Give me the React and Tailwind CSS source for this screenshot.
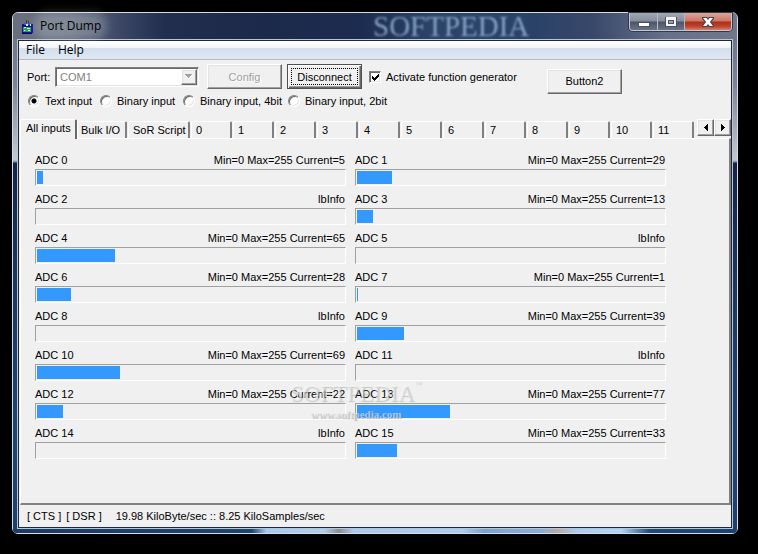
import React from "react";

const CHANNELS = [
  5, 29, null, 13, 65, null, 28, 1, null, 39, 69, null, 22, 77, null, 33,
];

const NUMBER_TABS = ["0", "1", "2", "3", "4", "5", "6", "7", "8", "9", "10", "11"];

const RAISED =
  "border border-t-white border-l-white border-r-[#696969] border-b-[#696969] shadow-[inset_-1px_-1px_0_#a0a0a0,inset_1px_1px_0_#e3e3e3] bg-[#f0f0f0]";

const TAB =
  "relative h-[17px] rounded-t-[2px] border-t border-l border-t-white border-l-white border-r-2 border-r-[#808080] text-left whitespace-nowrap leading-[16px]";

function AppIcon() {
  return (
    <svg width="16" height="16" viewBox="0 0 16 16" shapeRendering="crispEdges" aria-hidden="true">
      <path d="M3 1h2v1H3zM8 0h1v3H8zM12 1h2v1h-2zM5 2h2v1H5zM10 2h2v1h-2zM2 4h3v1H2zM11 4h3v1h-3zM6 3h5v1H6z" fill="#77724f" />
      <path d="M7 2h1v3H7zM9 3h1v2H9z" fill="#3c3b2c" />
      <path d="M3 6h11v9H3z" fill="#1010a8" />
      <path d="M5 5h3v2H5zM9 5h3v2H9z" fill="#2b55ff" />
      <path d="M7 6h2v2H7zM11 6h1v2h-1z" fill="#d9e6d5" />
      <path d="M4 9h8v5H4z" fill="#27a45a" />
      <path d="M5 9h2v1H5zM8 10h3v1H8zM5 12h1v1H5zM9 12h2v1H9z" fill="#d8f5d8" />
      <path d="M4 8h8v1H4zM3 15h10v1H3z" fill="#080850" />
    </svg>
  );
}

function TitleBar() {
  return (
    <header className="relative flex h-[26px] items-start rounded-t-[5px] bg-[linear-gradient(90deg,#687080_0%,#626b7e_8%,#3a4664_15%,#222e4e_21%,#1c294a_35%,#1c2c50_48%,#2b4468_58%,#2a4268_72%,#38486a_80%,#667088_90%,#70788a_100%)]">
      <span
        aria-hidden="true"
        className="absolute left-1/2 top-0 ml-[-2px] select-none font-['Liberation_Serif',serif] text-[29px] leading-[26px] text-[#9dbbdc] opacity-80 blur-[1px]"
      >
        SOFTPEDIA
      </span>
      <div className="relative flex items-center pl-[6px] pt-[5px]">
        <AppIcon />
        <h1 className="ml-[5px] rounded-full bg-white/20 font-['Open_Sans',sans-serif] text-[12px] leading-[16px] text-black shadow-[0_0_8px_6px_rgba(255,255,255,0.2)]">
          Port Dump
        </h1>
      </div>
      <div className="relative ml-auto mr-[5px] flex h-[18px] overflow-hidden rounded-b-[4px] border border-t-0 border-[#c4c9d2] shadow-[0_0_0_1px_#30384a]">
        <button
          type="button"
          aria-label="Minimize"
          className="flex w-[28px] items-center justify-center border-r border-[#b4bac5] bg-[linear-gradient(#a3a9b5_0%,#858c9b_48%,#4c5467_52%,#6b7386_100%)]"
        >
          <svg width="12" height="6" viewBox="0 0 12 6" className="mt-[4px]" shapeRendering="crispEdges">
            <path d="M0 1h12v5H0z" fill="#4b5263" />
            <path d="M1 2h10v3H1z" fill="#fff" />
          </svg>
        </button>
        <button
          type="button"
          aria-label="Maximize"
          className="flex w-[27px] items-center justify-center border-r border-[#b4bac5] bg-[linear-gradient(#a3a9b5_0%,#858c9b_48%,#4c5467_52%,#6b7386_100%)]"
        >
          <svg width="12" height="10" viewBox="0 0 12 10" shapeRendering="crispEdges">
            <path d="M0 0h12v10H0z" fill="#4b5263" />
            <path d="M1 0h10v9H1z" fill="#f4f4f6" />
            <path d="M3 3h6v4H3z" fill="#4b5263" />
            <path d="M4 4h4v2H4z" fill="#9aa1b0" />
          </svg>
        </button>
        <button
          type="button"
          aria-label="Close"
          className="flex w-[46px] items-center justify-center bg-[linear-gradient(#dda59b_0%,#cb7667_48%,#b02b16_52%,#bf4630_80%,#d4826a_100%)]"
        >
          <svg width="12" height="10" viewBox="0 0 12 10">
            <path d="M0 0h5l1 1 1-1h5v2L9 5l3 3v2H7L6 9l-1 1H0V8l3-3-3-3z" fill="#4b4550" />
            <path d="M1 1h3.500l1.500 2 1.500-2H11L7.800 5 11 9H7.500L6 7 4.500 9H1l3.200-4z" fill="#fff" />
          </svg>
        </button>
      </div>
    </header>
  );
}

function Radio({ id, label, className, checked }) {
  return (
    <div className={"flex items-center " + className}>
      <input
        id={id}
        name="mode"
        type="radio"
        defaultChecked={checked}
        className="size-[12px] shrink-0 appearance-none rounded-full border border-t-[#808080] border-l-[#808080] border-r-white border-b-white bg-white shadow-[inset_1px_1px_0_#696969,inset_-1px_-1px_0_#e3e3e3] checked:bg-[radial-gradient(circle,#000_2px,#fff_3px)]"
      />
      <label htmlFor={id} className="ml-[5px] whitespace-nowrap">
        {label}
      </label>
    </div>
  );
}

function Toolbar() {
  return (
    <div className="flex h-[59px] items-start pl-[8px] pt-[4px]">
      <div className="w-[520px]">
        <div className="flex h-[25px] items-center leading-[16px]">
          <label htmlFor="port" className="w-[28px]">
            Port:
          </label>
          <div className="relative flex w-[144px]">
            <select
              id="port"
              disabled
              className="h-[20px] w-full appearance-none border border-t-[#808080] border-l-[#808080] border-r-white border-b-white bg-white pl-[4px] text-[#808080] opacity-100 shadow-[inset_1px_1px_0_#696969,inset_-1px_-1px_0_#e3e3e3]"
            >
              <option>COM1</option>
            </select>
            <span
              className={
                "pointer-events-none absolute inset-y-[2px] right-[2px] flex w-[16px] items-center justify-center " + RAISED
              }
            >
              <svg width="8" height="5" viewBox="0 0 8 5" shapeRendering="crispEdges">
                <path d="M1 1h7v1H1zM2 2h5v1H2zM3 3h3v1H3zM4 4h1v1H4z" fill="#fff" />
                <path d="M0 0h7v1H0zM1 1h5v1H1zM2 2h3v1H2zM3 3h1v1H3z" fill="#a0a0a0" />
              </svg>
            </span>
          </div>
          <button
            type="button"
            disabled
            className={"ml-[8px] h-[25px] w-[75px] text-[#a0a0a0] [text-shadow:1px_1px_0_#fff] " + RAISED}
          >
            Config
          </button>
          <button
            type="button"
            className="ml-[5px] h-[25px] w-[75px] border border-[#505050] bg-[#f0f0f0] p-[3px] shadow-[inset_1px_1px_0_#fff,inset_-1px_-1px_0_#696969,inset_-2px_-2px_0_#a0a0a0]"
          >
            <span className="flex h-full items-center justify-center border border-dotted border-black">Disconnect</span>
          </button>
          <span className="relative ml-[7px] flex">
            <input
              id="funcgen"
              type="checkbox"
              defaultChecked
              className="size-[12px] appearance-none border border-t-[#808080] border-l-[#808080] border-r-white border-b-white bg-white shadow-[inset_1px_1px_0_#696969,inset_-1px_-1px_0_#e3e3e3]"
            />
            <svg
              width="7"
              height="7"
              viewBox="0 0 7 7"
              className="pointer-events-none absolute left-[3px] top-[3px]"
              shapeRendering="crispEdges"
            >
              <path d="M0 2h1v3H0zM1 3h1v3H1zM2 4h1v3H2zM3 3h1v3H3zM4 2h1v3H4zM5 1h1v3H5zM6 0h1v3H6z" />
            </svg>
          </span>
          <label htmlFor="funcgen" className="ml-[5px] whitespace-nowrap">
            Activate function generator
          </label>
        </div>
        <div className="mt-[5px] flex h-[14px] items-center pl-px">
          <Radio id="m-text" label="Text input" className="w-[72px]" checked />
          <Radio id="m-bin" label="Binary input" className="w-[83px]" />
          <Radio id="m-bin4" label="Binary input, 4bit" className="w-[105px]" />
          <Radio id="m-bin2" label="Binary input, 2bit" className="" />
        </div>
      </div>
      <button type="button" className={"mt-[5px] h-[25px] w-[75px] pb-[2px] " + RAISED}>
        Button2
      </button>
    </div>
  );
}

function TabStrip() {
  return (
    <div className="flex h-[19px] items-end pl-px" role="tablist">
      <button
        type="button"
        role="tab"
        aria-selected="true"
        className="relative z-10 -mb-px h-[20px] w-[57px] rounded-t-[2px] border-t border-l border-r-2 border-t-white border-l-white border-r-[#696969] bg-[#f0f0f0] pb-[4px] pl-[5px] text-left leading-[14px] whitespace-nowrap"
      >
        All inputs
      </button>
      <button type="button" role="tab" aria-selected="false" className={TAB + " w-[50px] pl-[3px]"}>
        Bulk I/O
      </button>
      <button type="button" role="tab" aria-selected="false" className={TAB + " ml-[1px] w-[62px] pl-[4px]"}>
        SoR Script
      </button>
      {NUMBER_TABS.map((n) => (
        <button key={n} type="button" role="tab" aria-selected="false" className={TAB + " ml-[1px] w-[41px] pl-[4px]"}>
          {n}
        </button>
      ))}
      <div className="ml-auto flex h-[17px] self-start">
        <button type="button" aria-label="Scroll tabs left" className={"flex w-[17px] items-center justify-center " + RAISED}>
          <svg width="4" height="7" viewBox="0 0 4 7" shapeRendering="crispEdges">
            <path d="M3 0h1v7H3zM2 1h1v5H2zM1 2h1v3H1zM0 3h1v1H0z" />
          </svg>
        </button>
        <button type="button" aria-label="Scroll tabs right" className={"flex w-[17px] items-center justify-center " + RAISED}>
          <svg width="4" height="7" viewBox="0 0 4 7" shapeRendering="crispEdges">
            <path d="M0 0h1v7H0zM1 1h1v5H1zM2 2h1v3H2zM3 3h1v1H3z" />
          </svg>
        </button>
      </div>
    </div>
  );
}

function Channel({ index, value }) {
  return (
    <div>
      <div className="flex h-[16px] items-start justify-between whitespace-nowrap">
        <span>ADC {index}</span>
        <span className="pr-px">{value === null ? "lbInfo" : `Min=0 Max=255 Current=${value}`}</span>
      </div>
      <div
        role="progressbar"
        aria-label={`ADC ${index}`}
        aria-valuemin={0}
        aria-valuemax={255}
        aria-valuenow={value ?? 0}
        className="h-[17px] border border-t-[#a0a0a0] border-l-[#a0a0a0] border-r-white border-b-white p-px"
      >
        <div className="h-full bg-[#3399ff]" style={{ width: `${((value ?? 0) / 255) * 100}%` }} />
      </div>
    </div>
  );
}

function Watermark() {
  return (
    <div
      aria-hidden="true"
      className="pointer-events-none absolute left-1/2 top-[243px] -ml-[84px] w-[130px] select-none text-center font-['Liberation_Serif',serif] whitespace-nowrap"
    >
      <div className="flex justify-center text-[23px] leading-[24px] text-[#f0f0f0]/40 [text-shadow:1px_1px_1px_rgba(130,130,130,0.4),-1px_-1px_0_rgba(255,255,255,0.4)]">
        SOFTPEDIA<sup className="text-[7px] leading-[10px]">™</sup>
      </div>
      <div className="text-[11px] leading-[16px] font-bold text-[#eeeeee]/60 [text-shadow:1px_1px_1px_rgba(120,120,120,0.5)]">
        www.softpedia.com
      </div>
    </div>
  );
}

export default function App() {
  return (
    <div className="flex min-h-screen flex-col bg-black pb-[20px] pl-[12px] pr-[20px] pt-[12px] font-['Liberation_Sans',Arial,sans-serif] text-[11px] leading-[14px] text-black">
      <div className="flex flex-1 flex-col rounded-[6px] border border-[#d5dde6] bg-[linear-gradient(#687082_0px,#7b8496_70px,#c3c9d3_147px,#7f899c_149px,#13234a_150px,#183763_270px,#1b4575_420px,#1b4070_100%)]">
        <TitleBar />
        <div className="mx-[4px] flex flex-1 flex-col border border-[#b9c5d3]">
          <div className="flex flex-1 flex-col border border-[#202838] bg-[#f0f0f0]">
            <nav className="flex h-[19px] items-center border-b border-[#b6bcc8] bg-[linear-gradient(#fff_0px,#f2f4f7_7px,#d2dfee_7px,#e0e7f1_18px)] font-['Open_Sans',sans-serif] text-[12px] leading-[18px]">
              <button type="button" className="ml-[7px] w-[32px] text-left">
                File
              </button>
              <button type="button">Help</button>
            </nav>
            <Toolbar />
            <TabStrip />
            <main className="relative ml-px flex-1 border-b-2 border-l border-r-2 border-t border-b-[#808080] border-l-white border-r-[#808080] border-t-white pb-[42px] pl-[14px] pr-[63px] pt-[14px]">
              <div className="grid grid-cols-2 gap-x-[9px] gap-y-[6px]">
                {CHANNELS.map((value, i) => (
                  <Channel key={i} index={i} value={value} />
                ))}
              </div>
              <Watermark />
            </main>
            <footer className="flex h-[22px] items-center pl-[8px] whitespace-pre">
              <span>[ CTS ]</span>
              <span className="ml-[5px]">[ DSR ]</span>
              <span className="ml-[14px]">19.98 KiloByte/sec :: 8.25 KiloSamples/sec</span>
            </footer>
          </div>
        </div>
        <div className="h-[4px] rounded-b-[5px] bg-[linear-gradient(90deg,#1a3c66_0%,#1c4570_33%,#a5cbf2_35%,#b0cfee_43%,#8a8d93_45%,#a9cbee_47%,#aacdf2_62%,#7ba3cf_65%,#8aaedb_73%,#b5aaa5_75%,#aacdf2_78%,#b0d5fb_84%,#1d4a78_88%,#1a4270_100%)]" />
      </div>
    </div>
  );
}
